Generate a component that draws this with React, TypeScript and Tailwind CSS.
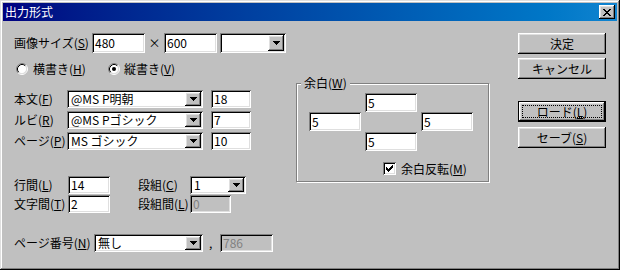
import React from 'react';

const raised =
  'shadow-[inset_-1px_-1px_#000,inset_1px_1px_#fff,inset_-2px_-2px_#808080,inset_2px_2px_#dfdfdf]';
const sunken =
  'shadow-[inset_1px_1px_#808080,inset_-1px_-1px_#fff,inset_2px_2px_#000,inset_-2px_-2px_#dfdfdf]';

const M: React.FC<{ t: string; k: string }> = ({ t, k }) => (
  <span className="whitespace-nowrap">
    {t}(<span className="underline underline-offset-[1px]">{k}</span>)
  </span>
);

const Edit: React.FC<{ value: string; className: string; disabled?: boolean }> = ({ value, className, disabled }) => (
  <div
    className={`${sunken} ${disabled ? 'bg-[#c0c0c0] text-[#808080]' : 'bg-white text-black'} ${className} flex items-center pl-[3px] leading-none`}
  >
    {value}
  </div>
);

const Arrow = () => (
  <svg width="7" height="4" viewBox="0 0 7 4" shapeRendering="crispEdges">
    <rect x="0" y="0" width="7" height="1" fill="#000" />
    <rect x="1" y="1" width="5" height="1" fill="#000" />
    <rect x="2" y="2" width="3" height="1" fill="#000" />
    <rect x="3" y="3" width="1" height="1" fill="#000" />
  </svg>
);

const Combo: React.FC<{ value: string; className: string }> = ({ value, className }) => (
  <div className={`${sunken} bg-white ${className} flex p-[2px]`}>
    <div className="flex-1 flex items-center pl-[2px] leading-none">{value}</div>
    <div className={`${raised} bg-[#c0c0c0] w-[16px] flex items-center justify-center`}>
      <Arrow />
    </div>
  </div>
);

const Radio: React.FC<{ checked?: boolean }> = ({ checked }) => (
  <svg width="12" height="12" viewBox="0 0 12 12">
    <circle cx="6" cy="6" r="4.5" fill="#fff" />
    <path d="M2.11 9.89 A5.5 5.5 0 0 1 9.89 2.11" stroke="#808080" fill="none" />
    <path d="M9.89 2.11 A5.5 5.5 0 0 1 2.11 9.89" stroke="#fff" fill="none" />
    <path d="M2.82 9.18 A4.5 4.5 0 0 1 9.18 2.82" stroke="#000" fill="none" />
    <path d="M9.18 2.82 A4.5 4.5 0 0 1 2.82 9.18" stroke="#dfdfdf" fill="none" />
    {checked && <circle cx="6" cy="6" r="2" fill="#000" />}
  </svg>
);

const Button: React.FC<{ children: React.ReactNode; isDefault?: boolean; className?: string }> = ({
  children,
  isDefault,
  className = '',
}) =>
  isDefault ? (
    <div className={`h-[21px] w-[88px] border border-black ${className}`}>
      <div className={`${raised} relative bg-[#c0c0c0] h-full flex items-center justify-center`}>
        {children}
        <div className="absolute inset-[3px] border border-dotted border-black" />
      </div>
    </div>
  ) : (
    <div className={`${raised} bg-[#c0c0c0] h-[21px] w-[88px] flex items-center justify-center ${className}`}>
      {children}
    </div>
  );

const CloseGlyph = () => {
  const rows = ['11000011', '01100110', '00111100', '00011000', '00111100', '01100110', '11000011'];
  return (
    <svg width="8" height="7" viewBox="0 0 8 7" shapeRendering="crispEdges">
      {rows.map((r, y) =>
        r.split('').map((c, x) => (c === '1' ? <rect key={`${x}-${y}`} x={x} y={y} width="1" height="1" fill="#000" /> : null))
      )}
    </svg>
  );
};

export default function App() {
  return (
    <div className="w-[620px] h-[270px] bg-[#c0c0c0] p-[3px] shadow-[inset_-1px_-1px_#000,inset_1px_1px_#dfdfdf,inset_-2px_-2px_#808080,inset_2px_2px_#fff] flex flex-col font-['Noto_Sans_CJK_JP',sans-serif] text-[12px] text-black">
      <div className="h-[18px] bg-gradient-to-r from-[#000080] to-[#1084d0] flex items-center pl-[2px] pr-[2px]">
        <span className="text-white leading-none">出力形式</span>
        <div className={`${raised} ml-auto w-[16px] h-[14px] bg-[#c0c0c0] flex items-center justify-center`}>
          <CloseGlyph />
        </div>
      </div>

      <div className="flex pl-[11px] pt-[12px]">
        {/* left column */}
        <div className="w-[282px] flex flex-col">
          <div className="flex items-center h-[20px]">
            <div className="w-[78px]">
              <M t="画像サイズ" k="S" />
            </div>
            <Edit value="480" className="w-[53px] h-[20px]" />
            <div className="w-[19px] text-center">×</div>
            <Edit value="600" className="w-[53px] h-[20px]" />
            <Combo value="" className="ml-[3px] w-[66px] h-[20px]" />
          </div>

          <div className="flex items-center h-[13px] mt-[9px] pl-[2px]">
            <div className="w-[92px] flex items-center">
              <Radio />
              <span className="ml-[5px]">
                <M t="横書き" k="H" />
              </span>
            </div>
            <Radio checked />
            <span className="ml-[4px]">
              <M t="縦書き" k="V" />
            </span>
          </div>

          <div className="flex flex-col gap-[3px] mt-[15px]">
            {[
              ['本文', 'F', '@MS P明朝', '18'],
              ['ルビ', 'R', '@MS Pゴシック', '7'],
              ['ページ', 'P', 'MS ゴシック', '10'],
            ].map(([t, k, font, size]) => (
              <div key={k} className="flex items-center h-[18px]">
                <div className="w-[53px]">
                  <M t={t} k={k} />
                </div>
                <Combo value={font} className="w-[136px] h-[18px]" />
                <Edit value={size} className="ml-[8px] w-[40px] h-[18px]" />
              </div>
            ))}
          </div>

          <div className="flex flex-col gap-[1px] mt-[26px]">
            <div className="flex items-center h-[18px]">
              <div className="w-[54px]">
                <M t="行間" k="L" />
              </div>
              <Edit value="14" className="w-[42px] h-[18px]" />
              <div className="ml-[28px] w-[52px]">
                <M t="段組" k="C" />
              </div>
              <Combo value="1" className="w-[56px] h-[18px]" />
            </div>
            <div className="flex items-center h-[18px]">
              <div className="w-[54px]">
                <M t="文字間" k="T" />
              </div>
              <Edit value="2" className="w-[42px] h-[18px]" />
              <div className="ml-[28px] w-[52px]">
                <M t="段組間" k="L" />
              </div>
              <Edit value="0" disabled className="w-[41px] h-[18px]" />
            </div>
          </div>

          <div className="flex items-center h-[18px] mt-[21px]">
            <div className="w-[80px]">
              <M t="ページ番号" k="N" />
            </div>
            <Combo value="無し" className="w-[109px] h-[18px]" />
            <div className="w-[17px] pl-[6px]">,</div>
            <Edit value="786" disabled className="w-[53px] h-[18px]" />
          </div>
        </div>

        {/* margin group */}
        <div className="mt-[50px] relative w-[193px] h-[99px] border border-[#808080] shadow-[1px_1px_0_#fff,inset_1px_1px_0_#fff] pl-[12px] pt-[9px] flex flex-col">
          <div className="absolute left-[4px] top-[-8px] bg-[#c0c0c0] px-[3px] leading-[14px]">
            <M t="余白" k="W" />
          </div>
          <Edit value="5" className="ml-[56px] w-[52px] h-[19px]" />
          <div className="flex">
            <Edit value="5" className="w-[52px] h-[19px]" />
            <Edit value="5" className="ml-[60px] w-[52px] h-[19px]" />
          </div>
          <Edit value="5" className="ml-[56px] mt-[1px] w-[52px] h-[19px]" />
          <div className="flex items-center ml-[74px] mt-[11px] h-[13px]">
            <div className={`${sunken} bg-white w-[13px] h-[13px] flex items-center justify-center`}>
              <svg width="7" height="7" viewBox="0 0 7 7" shapeRendering="crispEdges">
                <path d="M0 2h1v1h1v1h1V3h1V2h1V1h1V0h1v3H6v1H5v1H4v1H3v1H2V6H1V5H0z" fill="#000" />
              </svg>
            </div>
            <span className="ml-[5px]">
              <M t="余白反転" k="M" />
            </span>
          </div>
        </div>

        {/* buttons */}
        <div className="ml-[29px] flex flex-col">
          <Button>決定</Button>
          <Button className="mt-[4px]">キャンセル</Button>
          <Button isDefault className="mt-[22px]">
            <M t="ロード" k="L" />
          </Button>
          <Button className="mt-[5px]">
            <M t="セーブ" k="S" />
          </Button>
        </div>
      </div>
    </div>
  );
}
